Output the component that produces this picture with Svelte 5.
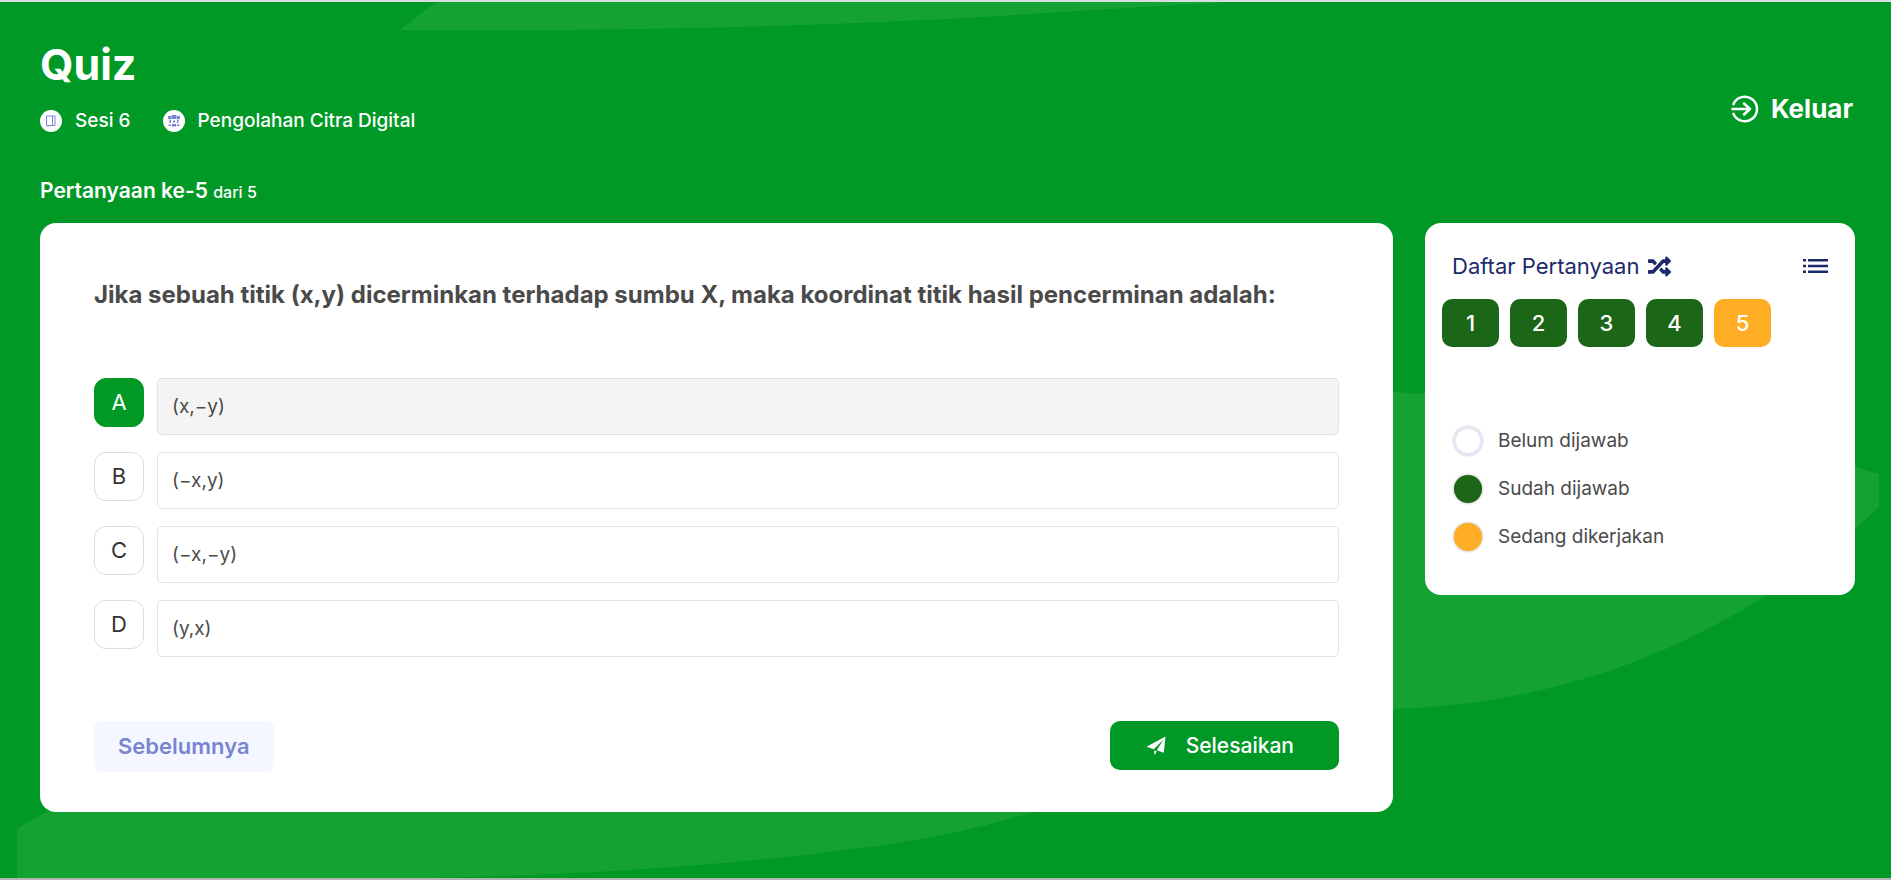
<script>
  const options = [
    { key: 'A', text: '(x,−y)' },
    { key: 'B', text: '(−x,y)' },
    { key: 'C', text: '(−x,−y)' },
    { key: 'D', text: '(y,x)' }
  ];
  const questions = [1, 2, 3, 4, 5];
  const legend = [
    { kind: 'empty', label: 'Belum dijawab' },
    { kind: 'done', label: 'Sudah dijawab' },
    { kind: 'current', label: 'Sedang dikerjakan' }
  ];
  let selected = $state('A');
  let current = $state(5);
</script>

<div class="page">
  <svg class="backdrop" viewBox="0 0 1891 876" preserveAspectRatio="none" aria-hidden="true">
    <path d="M436 0L400 28H560Q800 26 1000 14Q1140 5 1230 0Z" />
    <path d="M1393 390Q1660 405 1879 472V505C1800 580 1640 700 1393 707Z" />
    <path d="M17 827L48 809L200 740H1060L1033 810Q960 832 897 841Q700 870 430 876H17Z" />
  </svg>

  <header>
    <div>
      <h1>Quiz</h1>
      <div class="meta">
        <span class="item">
          <svg viewBox="0 0 22 22" aria-hidden="true">
            <circle cx="11" cy="11" r="11" fill="#fff" />
            <path d="M6.500 6h8.500v9.500H6.500zM12.500 6v9.500M7 15.500l1.500 1" fill="none" stroke="#7985d3" stroke-width="1" />
          </svg>
          Sesi 6
        </span>
        <span class="item">
          <svg viewBox="0 0 22 22" aria-hidden="true">
            <circle cx="11" cy="11" r="11" fill="#fff" />
            <g fill="#7985d3">
              <path d="M5 6h3v3H5zM8.500 5h5v4h-5zM14 6h3v3h-3zM6.500 9.500h1.500v3.500H6.500zM14 9.500h1.500v3.500H14zM10 10.500h2v2h-2zM5.500 14.500h2.500V16H5.500zM14 14.500h2.500V16H14zM9 14h4v2.500H9z" />
            </g>
          </svg>
          Pengolahan Citra Digital
        </span>
      </div>
    </div>
    <a class="exit" href="#keluar">
      <svg viewBox="0 0 28 28" fill="none" stroke="#fff" stroke-width="2.500" stroke-linecap="round" stroke-linejoin="round" aria-hidden="true">
        <path d="M2.400 9.200a12.300 12.300 0 1 1 0 9.600M1.500 14H19M13 8.500l6 5.500-6 5.500" />
      </svg>
      Keluar
    </a>
  </header>

  <p class="progress">Pertanyaan ke-5 <small>dari 5</small></p>

  <div class="columns">
    <main class="card question">
      <h2>Jika sebuah titik (x,y) dicerminkan terhadap sumbu X, maka koordinat titik hasil pencerminan adalah:</h2>
      <div class="options">
        {#each options as o}
          <button class="option" class:active={selected === o.key} onclick={() => (selected = o.key)}>
            <span class="key">{o.key}</span>
            <span class="answer">{o.text}</span>
          </button>
        {/each}
      </div>
      <div class="actions">
        <button class="prev">Sebelumnya</button>
        <button class="finish">
          <svg viewBox="0 0 20 20" aria-hidden="true">
            <path d="M19.500 .5 17.800 16.800 10.800 14.300 17.500 3.500 7.800 13.200 .5 10.800ZM8.300 14.300 11 15.500 8.300 19Z" fill="#fff" />
          </svg>
          Selesaikan
        </button>
      </div>
    </main>

    <aside class="card list">
      <div class="head">
        <h3>Daftar Pertanyaan</h3>
        <svg class="shuffle" viewBox="0 0 512 512" aria-hidden="true">
          <path fill="#1c2a6b" d="M504.971 359.029c9.373 9.373 9.373 24.569 0 33.941l-80 79.984c-15.010 15.010-40.971 4.490-40.971-16.971V416h-58.785a12.004 12.004 0 0 1-8.773-3.812l-70.556-75.596 53.333-57.143L352 336h32v-39.981c0-21.438 25.943-31.998 40.971-16.971l80 79.981zM12 176h84l52.781 56.551 53.333-57.143-70.556-75.596A11.999 11.999 0 0 0 122.785 96H12c-6.627 0-12 5.373-12 12v56c0 6.627 5.373 12 12 12zm372 0v39.984c0 21.460 25.961 31.980 40.971 16.971l80-79.984c9.373-9.373 9.373-24.569 0-33.941l-80-79.981C409.943 24.021 384 34.582 384 56.019V96h-58.785a12.004 12.004 0 0 0-8.773 3.812L96 336H12c-6.627 0-12 5.373-12 12v56c0 6.627 5.373 12 12 12h110.785c3.326 0 6.503-1.381 8.773-3.812L352 176h32z" />
        </svg>
        <button class="menu" aria-label="Daftar">
          <svg viewBox="0 0 25 14" fill="#1c2a6b" aria-hidden="true">
            <path d="M0 0h3v2.500H0zM5 0H25v2.500H5zM0 5.750h3v2.500H0zM5 5.750H25v2.500H5zM0 11.500h3V14H0zM5 11.500H25V14H5z" />
          </svg>
        </button>
      </div>
      <div class="numbers">
        {#each questions as n}
          <button class:current={n === current} onclick={() => (current = n)}>{n}</button>
        {/each}
      </div>
      <ul>
        {#each legend as l}
          <li><i class={l.kind}></i>{l.label}</li>
        {/each}
      </ul>
    </aside>
  </div>
</div>

<style>
  :global(body) {
    background: #009926;
  }
  .page,
  .page * {
    box-sizing: border-box;
  }
  .page {
    position: relative;
    z-index: 0;
    min-height: 100vh;
    padding: 36px 36px 40px 40px;
    border-top: 2px solid #d9dde0;
    border-bottom: 2px solid #b3b3b3;
    background: #009926;
    color: #fff;
    font-family: Inter, sans-serif;
  }
  .backdrop {
    position: absolute;
    inset: 0;
    z-index: -1;
    width: 100%;
    height: 100%;
    fill: #14a233;
  }
  h1, h2, h3, p, ul {
    margin: 0;
    padding: 0;
    font-weight: inherit;
  }
  button {
    padding: 0;
    border: 0;
    background: none;
    color: inherit;
    font: inherit;
    cursor: pointer;
  }
  header {
    display: flex;
    align-items: flex-end;
    justify-content: space-between;
  }
  h1 {
    font-size: 43px;
    font-weight: 700;
    line-height: 52px;
  }
  .meta {
    display: flex;
    gap: 32px;
    margin-top: 19px;
    font-size: 19px;
    font-weight: 500;
    line-height: 24px;
  }
  .item {
    display: flex;
    align-items: center;
    gap: 13px;
  }
  .item svg {
    width: 22px;
    height: 22px;
  }
  .exit {
    display: flex;
    align-items: center;
    gap: 12px;
    margin-bottom: 8px;
    padding-right: 2px;
    color: #fff;
    font-size: 26px;
    font-weight: 700;
    line-height: 32px;
    text-decoration: none;
  }
  .exit svg {
    width: 28px;
    height: 28px;
  }
  .progress {
    margin-top: 44px;
    font-size: 21px;
    font-weight: 600;
    line-height: 28px;
  }
  small {
    font-size: 16px;
    font-weight: 500;
  }
  .columns {
    display: grid;
    grid-template-columns: minmax(0, 1353fr) minmax(0, 430fr);
    gap: 32px;
    align-items: start;
    margin-top: 17px;
  }
  .card {
    border-radius: 16px;
    background: #fff;
    color: #4a4a4a;
  }
  .question {
    padding: 56px 54px 40px;
  }
  h2 {
    font-size: 24px;
    font-weight: 700;
    line-height: 32px;
  }
  .options {
    display: grid;
    gap: 17px;
    margin-top: 67px;
  }
  .option {
    display: flex;
    align-items: flex-start;
    gap: 13px;
    text-align: left;
  }
  .key {
    flex: none;
    width: 50px;
    border: 1px solid #dcdcdc;
    border-radius: 12px;
    color: #333;
    font-size: 22px;
    line-height: 47px;
    text-align: center;
  }
  .answer {
    flex: 1;
    padding: 0 14px;
    border: 1px solid #e2e2e2;
    border-radius: 5px;
    font-size: 19px;
    line-height: 55px;
  }
  .active .key {
    border-color: #009926;
    background: #009926;
    color: #fff;
  }
  .active .answer {
    background: #f4f4f4;
  }
  .actions {
    display: flex;
    align-items: flex-start;
    justify-content: space-between;
    margin-top: 64px;
  }
  .prev {
    padding: 0 24px;
    border-radius: 8px;
    background: #f4f7ff;
    color: #7985d3;
    font-size: 22px;
    font-weight: 600;
    line-height: 51px;
  }
  .finish {
    display: flex;
    align-items: center;
    gap: 20px;
    padding: 0 45px 0 36px;
    border-radius: 10px;
    background: #009926;
    color: #fff;
    font-size: 21px;
    font-weight: 500;
    line-height: 49px;
  }
  .finish svg {
    width: 20px;
    height: 20px;
  }
  .list {
    padding: 27px 17px 44px;
  }
  .head {
    display: flex;
    align-items: center;
    gap: 9px;
    padding: 0 10px;
    color: #1c2a6b;
  }
  h3 {
    font-size: 22px;
    font-weight: 400;
    line-height: 32px;
  }
  .shuffle {
    width: 23px;
    height: 23px;
  }
  .menu {
    display: flex;
    margin-left: auto;
  }
  .menu svg {
    width: 25px;
    height: 14px;
  }
  .numbers {
    display: flex;
    flex-wrap: wrap;
    gap: 11px;
    margin-top: 17px;
  }
  .numbers button {
    width: 57px;
    border-radius: 10px;
    background: #1b6617;
    color: #fff;
    font-size: 22px;
    font-weight: 500;
    line-height: 48px;
  }
  .numbers .current {
    background: #ffad24;
  }
  ul {
    display: grid;
    gap: 20px;
    margin-top: 80px;
    padding: 0 12px;
    font-size: 19px;
    line-height: 28px;
    list-style: none;
  }
  li {
    display: flex;
    align-items: center;
    gap: 16px;
  }
  i {
    width: 28px;
    height: 28px;
    border-radius: 50%;
    box-shadow: 0 0 3px rgba(0, 0, 0, 0.35);
  }
  .empty {
    border: 2px solid #e2e6fb;
  }
  .done {
    background: #1b6617;
  }
  .current {
    background: #ffad24;
  }
</style>
